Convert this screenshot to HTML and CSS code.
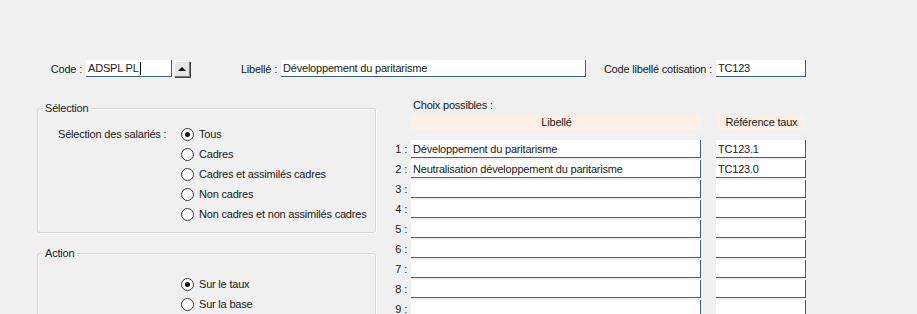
FILE: index.html
```
<!DOCTYPE html>
<html lang="fr">

<head>
    <meta charset="UTF-8">
    <meta name="viewport" content="width=device-width, initial-scale=1.0">
    <title>Cotisation</title>
    <link rel="stylesheet" href="styles.css">
</head>

<body>
    <div class="topbar">
        <span class="lbl lbl-code">Code :</span>
        <div class="field f-code">ADSPL PL<span class="caret"></span></div>
        <div class="spin-btn"><span class="tri"></span></div>

        <span class="lbl lbl-libelle">Libellé :</span>
        <div class="field f-libelle">Développement du paritarisme</div>

        <span class="lbl lbl-cotis">Code libellé cotisation :</span>
        <div class="field f-cotis">TC123</div>
    </div>

    <div class="main">
        <div class="left">
            <fieldset class="group group-sel">
                <legend>Sélection</legend>
                <div class="sel-row">
                    <span class="sel-label">Sélection des salariés :</span>
                    <div class="radios">
                        <div class="radio checked"><span class="dot"></span>Tous</div>
                        <div class="radio"><span class="dot"></span>Cadres</div>
                        <div class="radio"><span class="dot"></span>Cadres et assimilés cadres</div>
                        <div class="radio"><span class="dot"></span>Non cadres</div>
                        <div class="radio"><span class="dot"></span>Non cadres et non assimilés cadres</div>
                    </div>
                </div>
            </fieldset>

            <fieldset class="group group-action">
                <legend>Action</legend>
                <div class="radios action-radios">
                    <div class="radio checked"><span class="dot"></span>Sur le taux</div>
                    <div class="radio"><span class="dot"></span>Sur la base</div>
                </div>
            </fieldset>
        </div>

        <div class="right">
            <div class="choix">Choix possibles :</div>
            <div class="head-row">
                <div class="num"></div>
                <div class="hd hd-lib">Libellé</div>
                <div class="hd hd-ref">Référence taux</div>
            </div>
            <div class="rows">
                <div class="row"><span class="num">1 :</span><div class="field c-lib">Développement du paritarisme</div><div class="field c-ref">TC123.1</div></div>
                <div class="row"><span class="num">2 :</span><div class="field c-lib">Neutralisation développement du paritarisme</div><div class="field c-ref">TC123.0</div></div>
                <div class="row"><span class="num">3 :</span><div class="field c-lib"></div><div class="field c-ref"></div></div>
                <div class="row"><span class="num">4 :</span><div class="field c-lib"></div><div class="field c-ref"></div></div>
                <div class="row"><span class="num">5 :</span><div class="field c-lib"></div><div class="field c-ref"></div></div>
                <div class="row"><span class="num">6 :</span><div class="field c-lib"></div><div class="field c-ref"></div></div>
                <div class="row"><span class="num">7 :</span><div class="field c-lib"></div><div class="field c-ref"></div></div>
                <div class="row"><span class="num">8 :</span><div class="field c-lib"></div><div class="field c-ref"></div></div>
                <div class="row"><span class="num">9 :</span><div class="field c-lib"></div><div class="field c-ref"></div></div>
            </div>
        </div>
    </div>
</body>

</html>
```

FILE: styles.css
```
* {
    margin: 0;
    padding: 0;
    box-sizing: border-box;
}

html,
body {
    height: 100%;
    overflow: hidden;
}

body {
    background: #f0f0f0;
    font-family: "Liberation Sans", Arial, sans-serif;
    font-size: 11px;
    letter-spacing: -0.2px;
    color: #1a1a1a;
}

/* top line : code / libelle / code cotisation */
.topbar {
    display: flex;
    align-items: center;
    padding: 60px 0 0 40px;
    height: 77px;
}

.lbl {
    text-align: right;
    margin-right: 4px;
    white-space: nowrap;
}

.lbl-code {
    width: 42px;
}

.lbl-libelle {
    width: 77px;
    margin-left: 10px;
}

.lbl-cotis {
    width: 116px;
    margin-left: 10px;
}

.field {
    height: 17px;
    line-height: 16px;
    background: #fff;
    border-right: 1px solid #3b6275;
    border-bottom: 1px solid #3b6275;
    padding-left: 2px;
    white-space: nowrap;
    overflow: hidden;
    display: flex;
    align-items: center;
}

.f-code {
    width: 86px;
}

.f-libelle {
    width: 305px;
}

.f-cotis {
    width: 90px;
}

.caret {
    display: inline-block;
    width: 1px;
    height: 13px;
    background: #000;
    margin-left: 1px;
}

.spin-btn {
    width: 16px;
    height: 16px;
    margin-left: 2px;
    background: #e6e6e6;
    border: 1px solid #fff;
    border-right-color: #7a7a7a;
    border-bottom-color: #7a7a7a;
    box-shadow: 1px 1px 0 #404040;
    display: flex;
    align-items: center;
    justify-content: center;
}

.spin-btn .tri {
    width: 0;
    height: 0;
    border-left: 4px solid transparent;
    border-right: 4px solid transparent;
    border-bottom: 4px solid #000;
}

/* main area */
.main {
    display: flex;
    padding-left: 37px;
}

.left {
    width: 339px;
}

.group {
    border: 1px solid #d5d5d5;
    border-radius: 3px;
    box-shadow: 1px 1px 0 #fff, inset 1px 1px 0 #fff;
}

.group legend {
    margin-left: 5px;
    padding: 0 3px 0 2px;
    line-height: 14px;
}

.group-sel {
    margin-top: 24px;
    padding: 9px 0 8px 0;
}

.group-action {
    margin-top: 13px;
    padding: 14px 0 30px 0;
}

.sel-row {
    display: flex;
    padding-left: 20px;
}

.action-radios {
    padding-left: 143px;
}

.sel-label {
    width: 123px;
    height: 20px;
    line-height: 20px;
}

.radio {
    height: 20px;
    display: flex;
    align-items: center;
    white-space: nowrap;
}

.radio .dot {
    width: 13px;
    height: 13px;
    border: 1px solid #3a3a3a;
    border-radius: 50%;
    background: #fff;
    margin-right: 5px;
    display: flex;
    align-items: center;
    justify-content: center;
}

.radio.checked .dot::after {
    content: "";
    width: 5px;
    height: 5px;
    border-radius: 50%;
    background: #111;
}

/* right : choix possibles */
.right {
    margin-left: 11px;
}

.choix {
    margin-top: 22px;
    padding-left: 26px;
    line-height: 13px;
}

.head-row {
    display: flex;
    margin-top: 3px;
    height: 15px;
}

.hd {
    background: #fcefe6;
    text-align: center;
    line-height: 15px;
}

.hd-lib {
    width: 291px;
}

.hd-ref {
    width: 89px;
    margin-left: 15px;
}

.rows {
    margin-top: 10px;
}

.row {
    display: flex;
    align-items: center;
    margin-bottom: 2px;
}

.num {
    width: 24px;
    text-align: right;
    padding-right: 4px;
    white-space: nowrap;
}

.row .field {
    height: 18px;
}

.c-lib {
    width: 290px;
}

.c-ref {
    width: 90px;
    margin-left: 15px;
}
```
